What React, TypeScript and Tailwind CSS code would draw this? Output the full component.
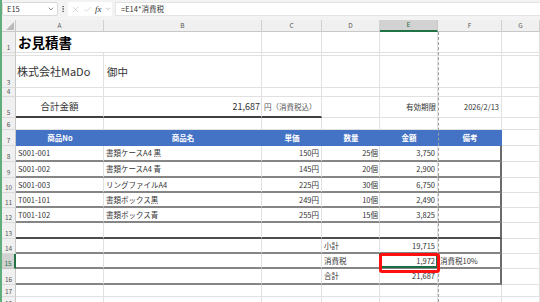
import { ChevronDown, Check, X, EllipsisVertical } from "lucide-react";
import type { ReactNode } from "react";

const cols = "grid grid-cols-[14px_88px_158px_60px_58px_58px_64px_38px]";

// border presets
const GB = "border-b border-b-[#e1e1e1]";
const GR = "border-r border-r-[#e1e1e1]";
const TL = "border-b-2 border-b-[#858585]";
const TD = "border-b-2 border-b-[#4d4d4d]";
const FR = "border-r-2 border-r-[#6b6b6b]";

function C({
  children,
  className = "",
  b = GB,
  r = GR,
}: {
  children?: ReactNode;
  className?: string;
  b?: string;
  r?: string;
}) {
  return (
    <div className={`flex items-center whitespace-nowrap text-[7.5px] text-[#333] ${b} ${r} ${className}`}>
      {children}
    </div>
  );
}

function Row({ h, n, active, children }: { h: string; n: number; active?: boolean; children: ReactNode }) {
  return (
    <div className={`${cols} ${h}`}>
      <div
        className={
          active
            ? "flex items-end justify-center overflow-hidden bg-[#d2d2d2] border-r-2 border-r-[#217346] border-b border-b-[#c4c4c4] text-[6.5px] leading-[9px] text-[#217346]"
            : "flex items-end justify-center overflow-hidden bg-[#f0f0f0] border-r border-r-[#c8c8c8] border-b border-b-[#dadada] text-[6.5px] leading-[9px] text-[#555]"
        }
      >
        {n}
      </div>
      {children}
    </div>
  );
}

const items = [
  ["S001-001", "書類ケースA4 黒", "150円", "25個", "3,750", "h-[16px]"],
  ["S001-002", "書類ケースA4 青", "145円", "20個", "2,900", "h-[16px]"],
  ["S001-003", "リングファイルA4", "225円", "30個", "6,750", "h-[15px]"],
  ["T001-101", "書類ボックス黒", "249円", "10個", "2,490", "h-[15px]"],
  ["T001-102", "書類ボックス青", "255円", "15個", "3,825", "h-[15px]"],
];

const heads = ["商品No", "商品名", "単価", "数量", "金額", "備考"];
const letters = ["A", "B", "C", "D", "E", "F", "G"];

export default function App() {
  return (
    <div className="relative w-[540px] h-[302px] overflow-hidden bg-white border-l-2 border-l-[#5fae7c] font-['Noto_Sans_CJK_JP',sans-serif]">
      {/* formula bar */}
      <div className="h-[20px] bg-[#f3f3f3] flex items-start pt-[2px]">
        <div className="w-[56px] h-[14px] bg-white border border-[#d9d9d9] rounded-[2px] flex items-center justify-between pl-[4px] pr-[2px]">
          <span className="text-[7.5px] text-[#333]">E15</span>
          <ChevronDown size={8} strokeWidth={2} className="text-[#555]" />
        </div>
        <div className="w-[10px] h-[14px] flex items-center justify-center text-[#666]">
          <EllipsisVertical size={8} strokeWidth={3} />
        </div>
        <div className="w-[44px] h-[14px] bg-white rounded-[2px] flex items-center gap-[3px] pl-[3px]">
          <X size={9} strokeWidth={1.5} className="text-[#bdbdbd]" />
          <Check size={9} strokeWidth={1.5} className="text-[#bdbdbd]" />
          <span className="font-['Liberation_Serif',serif] italic text-[9px] leading-none text-[#333]">fx</span>
          <ChevronDown size={6} strokeWidth={2} className="text-[#888]" />
        </div>
        <div className="ml-[3px] flex-1 h-[14px] bg-white border-y border-l border-[#e3e3e3] flex items-center pl-[5px] text-[7.5px] text-[#333]">
          =E14*消費税
        </div>
      </div>

      {/* column headers */}
      <div className={`${cols} h-[12px]`}>
        <div className="relative bg-[#f0f0f0] border-r border-r-[#c8c8c8] border-b border-b-[#c8c8c8]">
          <svg className="absolute right-[1px] bottom-[1px]" width="8" height="8" viewBox="0 0 8 8">
            <polygon points="8,0 8,8 0,8" fill="#b9b9b9" />
          </svg>
        </div>
        {letters.map((l) =>
          l === "E" ? (
            <div key={l} className="flex items-center justify-center bg-[#d2d2d2] border-r border-r-[#c8c8c8] border-b-2 border-b-[#217346] text-[6.5px] text-[#217346]">
              {l}
            </div>
          ) : (
            <div key={l} className="flex items-center justify-center bg-[#f0f0f0] border-r border-r-[#d0d0d0] border-b border-b-[#c8c8c8] text-[6.5px] text-[#555]">
              {l}
            </div>
          )
        )}
      </div>

      {/* row 1 */}
      <Row h="h-[21px]" n={1}>
        <C className="pl-[2px] text-[13.5px] font-bold text-black" r="">お見積書</C>
        <C />
        <C />
        <C />
        <C />
        <C />
        <C />
      </Row>
      <Row h="h-[3px]" n={2}>
        <C /><C /><C /><C /><C /><C /><C />
      </Row>
      <Row h="h-[32px]" n={3}>
        <C className="pl-[1px] text-[11px] text-[#333]">株式会社MaDo</C>
        <C className="pl-[3px] text-[10.5px] text-[#333]">御中</C>
        <C /><C /><C /><C /><C />
      </Row>
      <Row h="h-[9px]" n={4}>
        <C /><C /><C /><C /><C /><C /><C />
      </Row>
      <Row h="h-[21px]" n={5}>
        <C className="justify-center text-[9.5px]" b="border-b-2 border-b-[#3f3f3f]">合計金額</C>
        <C className="justify-end pr-[1px] text-[9px]" b="border-b-2 border-b-[#3f3f3f]">21,687</C>
        <C className="pl-[2px] text-[6.5px] text-[#555]" b="border-b-2 border-b-[#3f3f3f]">円（消費税込）</C>
        <C />
        <C className="justify-end pr-[1px] text-[7.5px]">有効期限</C>
        <C className="justify-end pr-[2px] text-[7.5px]">2026/2/13</C>
        <C />
      </Row>
      <Row h="h-[12px]" n={6}>
        <C /><C /><C /><C /><C /><C /><C />
      </Row>

      {/* table header */}
      <Row h="h-[16px]" n={7}>
        {heads.map((t) => (
          <div key={t} className="flex items-center justify-center bg-[#4472c4] text-[7.5px] font-bold text-white">
            {t}
          </div>
        ))}
        <C />
      </Row>

      {items.map((it, i) => (
        <Row key={it[0]} h={it[5]} n={8 + i}>
          <C className="pl-[2px]" b={TL}>{it[0]}</C>
          <C className="pl-[2px]" b={TL}>{it[1]}</C>
          <C className="justify-end pr-[2px]" b={TL}>{it[2]}</C>
          <C className="justify-end pr-[1px]" b={TL}>{it[3]}</C>
          <C className="justify-end pr-[2px]" b={TL}>{it[4]}</C>
          <C b={TL} r={FR} />
          <C />
        </Row>
      ))}

      <Row h="h-[16px]" n={13}>
        <C b={TD} /><C b={TD} /><C b={TD} /><C b={TD} /><C b={TD} />
        <C b={TD} r={FR} />
        <C />
      </Row>
      <Row h="h-[15px]" n={14}>
        <C b={TL} /><C b={TL} /><C b={TL} />
        <C className="pl-[2px]" b={TL}>小計</C>
        <C className="justify-end pr-[2px]" b={TL}>19,715</C>
        <C b={TL} r={FR} />
        <C />
      </Row>
      <Row h="h-[15px]" n={15} active>
        <C b={TL} /><C b={TL} /><C b={TL} />
        <C className="pl-[2px]" b={TL}>消費税</C>
        <C className="relative justify-end pr-[2px]" b={TL}>
          <div className="absolute -left-[1px] -top-[1px] -right-[1px] -bottom-[1px] border-2 border-[#1f6b43]" />
          1,972
        </C>
        <C className="pl-[2px]" b={TL} r={FR}>消費税10%</C>
        <C />
      </Row>
      <Row h="h-[16px]" n={16}>
        <C b={TL} /><C b={TL} /><C b={TL} />
        <C className="pl-[2px]" b={TL}>合計</C>
        <C className="justify-end pr-[2px]" b={TL}>21,687</C>
        <C b={TL} r={FR} />
        <C />
      </Row>
      <Row h="h-[12px]" n={17}>
        <C /><C /><C /><C /><C /><C /><C />
      </Row>
      <Row h="h-[12px]" n={18}>
        <C /><C /><C /><C /><C /><C /><C />
      </Row>

      {/* page break line */}
      <div className="absolute left-[436px] top-[32px] bottom-0 border-l border-dashed border-l-[#a0a0a0]" />
      {/* red highlight */}
      <div className="absolute left-[377px] top-[253px] w-[61px] h-[20px] border-[3px] border-[#ff1010] rounded-[3px]" />
    </div>
  );
}
